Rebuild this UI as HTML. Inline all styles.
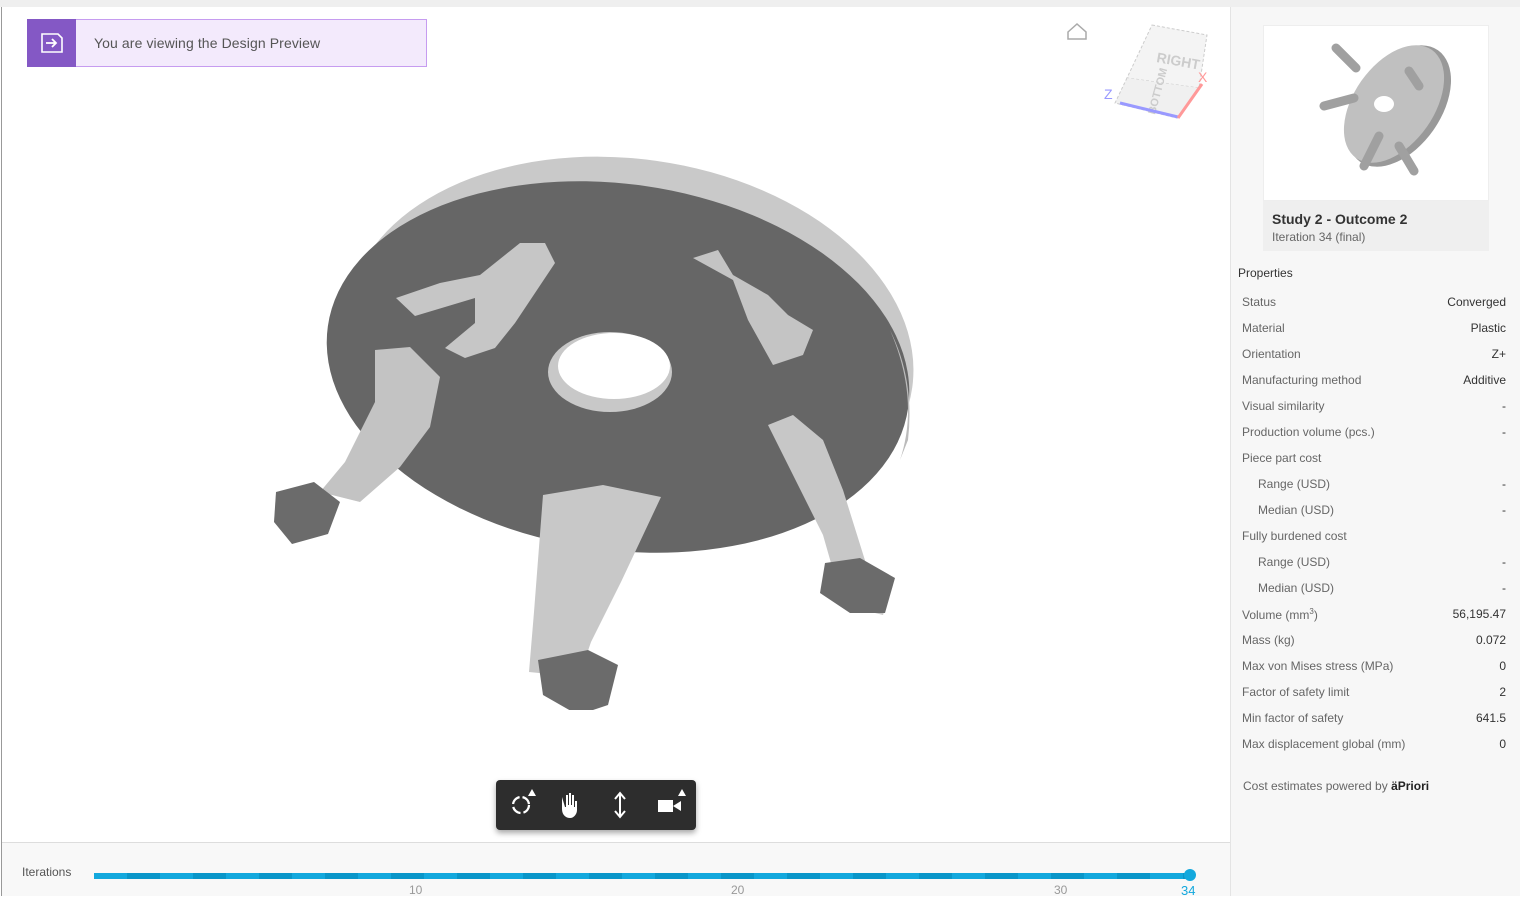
<!DOCTYPE html>
<html><head><meta charset="utf-8"><style>
*{margin:0;padding:0;box-sizing:border-box}
body{width:1520px;height:896px;overflow:hidden;background:#fff;font-family:"Liberation Sans",sans-serif;position:relative}
.topbar{position:absolute;left:0;top:0;width:1520px;height:7px;background:#efefef}
.lb{position:absolute;left:1px;top:7px;width:1px;height:889px;background:#999}
.banner{position:absolute;left:27px;top:19px;width:400px;height:48px;border:1px solid #c69cf0;background:#f3eafc}
.banner .ic{position:absolute;left:-1px;top:-1px;width:49px;height:48px;background:#8458c5}
.banner span{position:absolute;left:66px;top:15px;font-size:14px;color:#555;letter-spacing:.1px}
.side{position:absolute;left:1230px;top:7px;width:290px;height:889px;background:#f7f7f7;border-left:1px solid #e4e4e4}
.thumb{position:absolute;left:1263px;top:25px;width:226px;height:176px;background:#fff;border:1px solid #eee}
.cap{position:absolute;left:1263px;top:201px;width:226px;height:50px;background:#efefef}
.cap b{position:absolute;left:9px;top:10px;font-size:14px;color:#333}
.cap i{position:absolute;left:9px;top:29px;font-size:12px;color:#666;font-style:normal}
.props{position:absolute;left:1238px;top:266px;font-size:12px;color:#333}
.row{position:absolute;left:1242px;width:264px;font-size:12px;color:#666}
.row .v{position:absolute;right:0;top:0;color:#333}
.bottom{position:absolute;left:2px;top:842px;width:1228px;height:54px;background:#f8f8f8;border-top:1px solid #ddd}
.track{position:absolute;left:94px;top:873px;width:1096px;height:6px;background:repeating-linear-gradient(90deg,#13a8dd 0 33px,#0996c9 33px 66px)}
.knob{position:absolute;left:1184px;top:869px;width:12px;height:12px;border-radius:50%;background:#13a8dd}
.tick{position:absolute;top:883px;font-size:12px;color:#999}
.tool{position:absolute;left:496px;top:780px;width:200px;height:50px;background:#2d2d2d;border-radius:4px;box-shadow:0 3px 6px rgba(0,0,0,.35)}
</style></head><body>
<div class="topbar"></div><div class="lb"></div>
<div class="banner"><div class="ic"><svg width="49" height="48"><path d="M15 15h16l4 4v14H15z" fill="none" stroke="#fff" stroke-width="1.6"/><path d="M19 24h10M25 20l4 4-4 4" fill="none" stroke="#fff" stroke-width="1.8"/></svg></div><span>You are viewing the Design Preview</span></div>

<svg style="position:absolute;left:1060px;top:15px" width="160" height="120">
<path d="M8 17l9-8 9 8v7H8z" fill="none" stroke="#aaa" stroke-width="1.5"/>
<path d="M92 10l55 10-8 53-72-10z" fill="#f4f4f4" stroke="#ccc" stroke-dasharray="3 2"/>
<path d="M67 63l-12 25 62 15 22-30" fill="#f0f0f0" stroke="#ccc" stroke-dasharray="3 2"/>
<text x="96" y="47" font-size="14" font-weight="bold" fill="#ccc" transform="rotate(10 96 47)">RIGHT</text>
<text x="95" y="100" font-size="11" font-weight="bold" fill="#ccc" transform="rotate(-75 95 100)">BOTTOM</text>
<path d="M60 88l58 14" stroke="#99f" stroke-width="3"/><path d="M118 103l24-34" stroke="#f99" stroke-width="3"/>
<text x="44" y="84" font-size="14" fill="#99f">Z</text><text x="138" y="67" font-size="14" fill="#f99">X</text>
</svg>

<svg style="position:absolute;left:260px;top:150px" width="680" height="560">
<ellipse cx="370" cy="198" rx="285" ry="189" transform="rotate(8 370 198)" fill="#c9c9c9"/>
<ellipse cx="358" cy="217" rx="293" ry="183" transform="rotate(8 358 217)" fill="#666"/>
<path d="M630 180 q25 50 18 110 l-8 20 q20-60 -10-130z" fill="#bbb"/>
<ellipse cx="350" cy="222" rx="62" ry="40" fill="#c8c8c8"/>
<ellipse cx="354" cy="216" rx="56" ry="33" fill="#fff"/>
<path d="M136 148l44-15 40-8 40-32 25 0 10 20-40 60-20 25-30 10-20-10 30-25 0-25-60 18z" fill="#c6c6c6"/>
<path d="M433 108l25-8 15 25 35 20 20 20 25 15-10 25-30 10-25-45-15-40z" fill="#c4c4c4"/>
<path d="M115 200l35 -3 30 30-10 50-30 40-40 35-40-10 25-30 30-60z" fill="#c3c3c3"/>
<path d="M16 342l38-10 26 20-12 32-36 10-18-22z" fill="#6b6b6b"/>
<path d="M283 345l60-10 58 12-40 85-30 60-12 35-50-5 5-60z" fill="#c8c8c8"/>
<path d="M278 510l50-10 30 15-10 40-30 10-35-20z" fill="#6b6b6b"/>
<path d="M508 275l25-10 30 25 20 50 25 80 25 15-10 30-40-10-20-70z" fill="#c7c7c7"/>
<path d="M565 413l35-5 35 20-10 35-35 0-30-20z" fill="#6b6b6b"/>
</svg>

<div class="tool"><svg width="200" height="50" fill="#fff"><circle cx="25" cy="25" r="8" fill="none" stroke="#fff" stroke-width="2.2" stroke-dasharray="10 3"/><path d="M36 9l4 7h-8z M186 9l4 7h-8z"/><path d="M66 17v12c0 6 4 9 8 9s7-4 7-8v-9h-2v6h-1V15h-2v10h-1V13h-2v12h-1V15h-2v12h-1z"/><path d="M124 14v22M119 19l5-6 5 6M119 31l5 6 5-6" fill="none" stroke="#fff" stroke-width="2"/><path d="M162 20h15v12h-15zM177 26l8-5v10z"/></svg></div>

<div class="side"></div>
<div class="thumb"><svg width="226" height="176"><ellipse cx="135" cy="80" rx="42" ry="68" transform="rotate(35 135 80)" fill="#999"/><ellipse cx="130" cy="78" rx="40" ry="66" transform="rotate(35 130 78)" fill="#c0c0c0"/><ellipse cx="120" cy="78" rx="10" ry="8" fill="#fff"/><path d="M72 22l20 20M60 80l30-8M100 140l15-30M150 145l-15-25M145 45l10 15" stroke="#a0a0a0" stroke-width="9" stroke-linecap="round"/></svg></div>
<div class="cap"><b>Study 2 - Outcome 2</b><i>Iteration 34 (final)</i></div>
<div class="props">Properties</div>
<div class="row" style="top:295px">Status<span class="v">Converged</span></div>
<div class="row" style="top:321px">Material<span class="v">Plastic</span></div>
<div class="row" style="top:347px">Orientation<span class="v">Z+</span></div>
<div class="row" style="top:373px">Manufacturing method<span class="v">Additive</span></div>
<div class="row" style="top:399px">Visual similarity<span class="v">-</span></div>
<div class="row" style="top:425px">Production volume (pcs.)<span class="v">-</span></div>
<div class="row" style="top:451px">Piece part cost</div>
<div class="row" style="top:477px"><span style="padding-left:16px">Range (USD)</span><span class="v">-</span></div>
<div class="row" style="top:503px"><span style="padding-left:16px">Median (USD)</span><span class="v">-</span></div>
<div class="row" style="top:529px">Fully burdened cost</div>
<div class="row" style="top:555px"><span style="padding-left:16px">Range (USD)</span><span class="v">-</span></div>
<div class="row" style="top:581px"><span style="padding-left:16px">Median (USD)</span><span class="v">-</span></div>
<div class="row" style="top:607px">Volume (mm<sup style="font-size:8px">3</sup>)<span class="v">56,195.47</span></div>
<div class="row" style="top:633px">Mass (kg)<span class="v">0.072</span></div>
<div class="row" style="top:659px">Max von Mises stress (MPa)<span class="v">0</span></div>
<div class="row" style="top:685px">Factor of safety limit<span class="v">2</span></div>
<div class="row" style="top:711px">Min factor of safety<span class="v">641.5</span></div>
<div class="row" style="top:737px">Max displacement global (mm)<span class="v">0</span></div>
<div class="row" style="top:779px;left:1243px">Cost estimates powered by <b style="color:#222">äPriori</b></div>

<div class="bottom"></div>
<div style="position:absolute;left:22px;top:865px;font-size:12px;color:#555">Iterations</div>
<div class="track"></div><div class="knob"></div>
<div class="tick" style="left:409px">10</div><div class="tick" style="left:731px">20</div><div class="tick" style="left:1054px">30</div>
<div class="tick" style="left:1181px;color:#13a8dd;font-size:13px">34</div>
</body></html>
